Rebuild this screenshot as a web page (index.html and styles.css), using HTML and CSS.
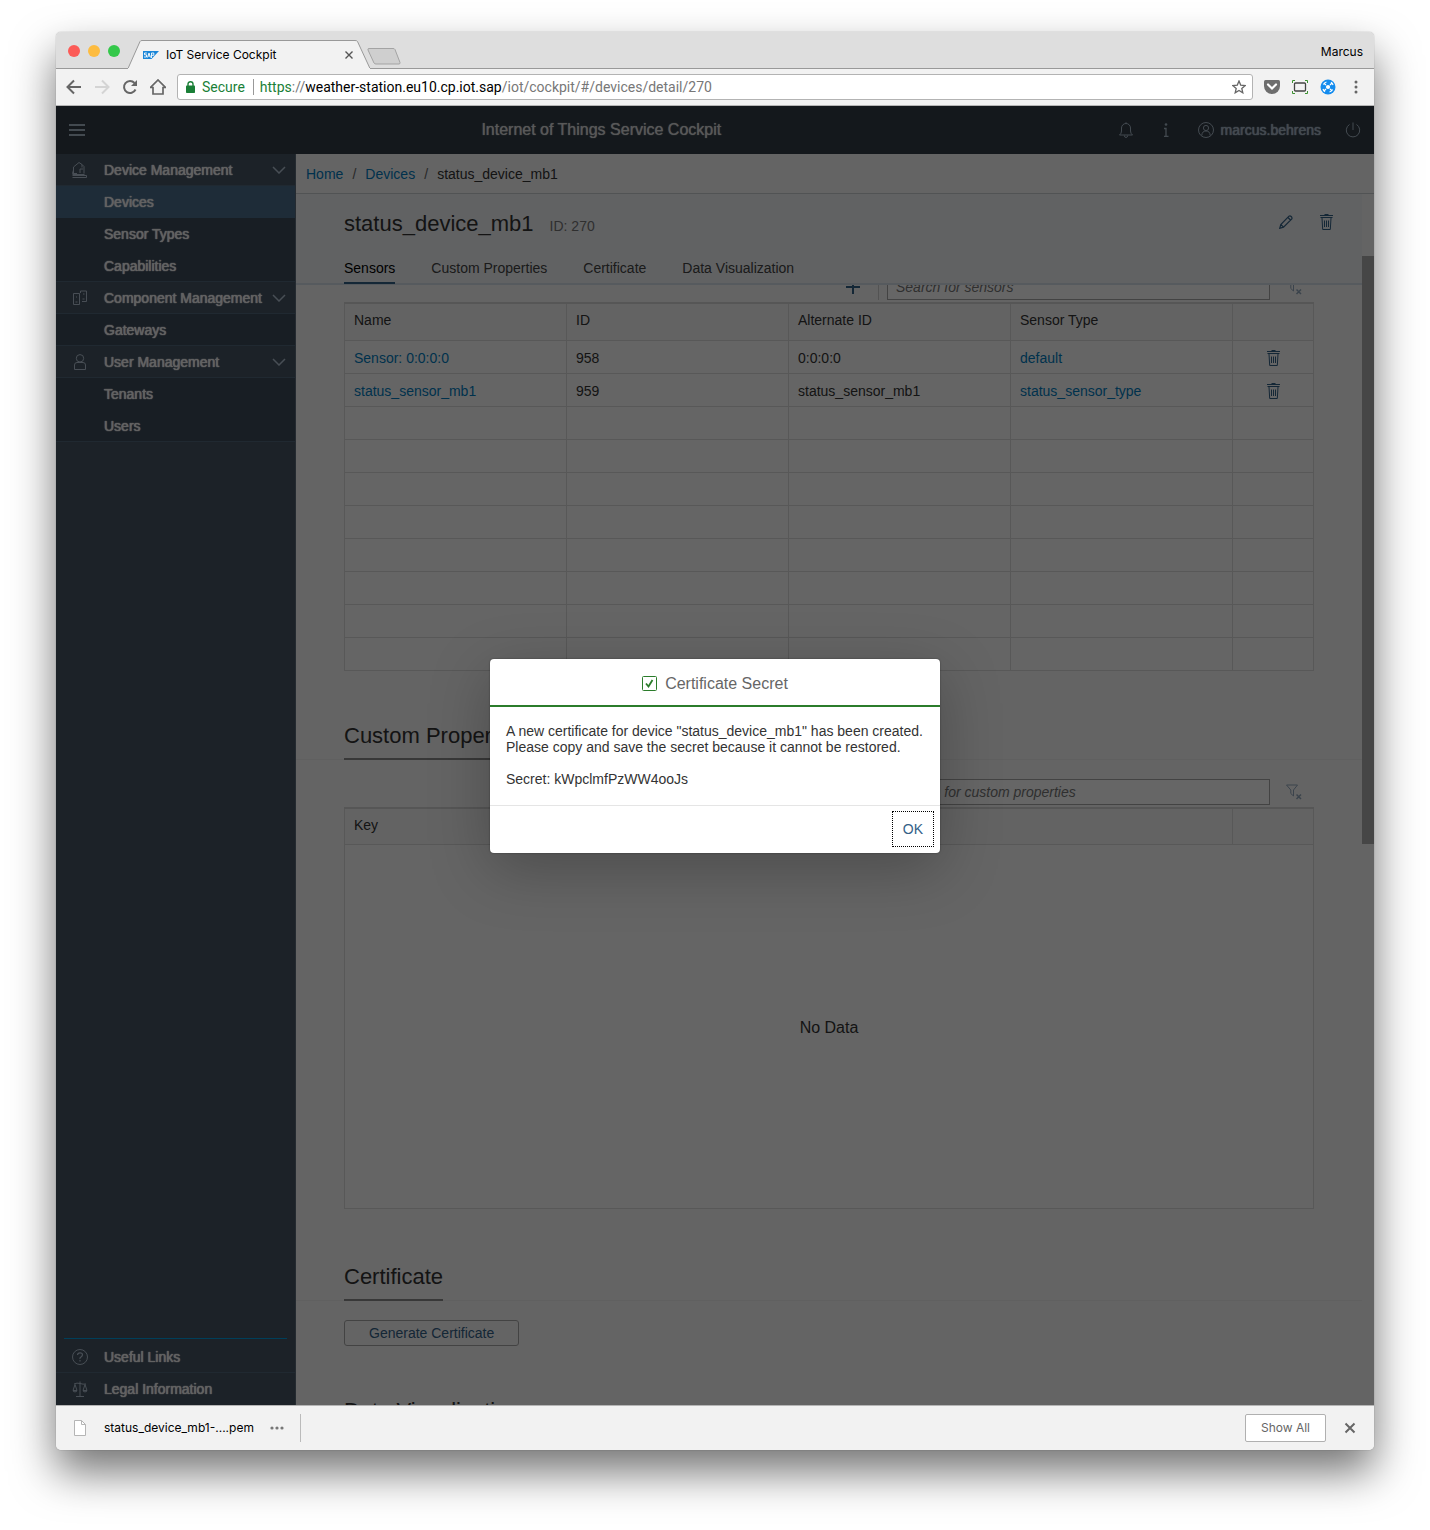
FILE: index.html
```html
<!DOCTYPE html>
<html lang="en">
<head>
<meta charset="utf-8">
<meta name="viewport" content="width=device-width, initial-scale=1">
<title>IoT Service Cockpit</title>
<link rel="stylesheet" href="styles.css">
</head>
<body>
<svg class="sprite" aria-hidden="true">
  <symbol id="trash" viewBox="0 0 13 16">
    <path d="M4.500.5h4M0 1.500h13M.5 3.500h12M2 4l.7 11.500h7.600L11 4M4.500 6.500V13M6.500 6.500V13M8.500 6.500V13" fill="none" stroke="currentColor"/>
  </symbol>
  <symbol id="chevron" viewBox="0 0 14 8">
    <path d="M1 1l6 6 6-6" fill="none" stroke="currentColor" stroke-width="1.500"/>
  </symbol>
  <symbol id="filter" viewBox="0 0 16 16">
    <path d="M.5 1h11L7.500 6v6L4.800 9.500V6z" fill="none" stroke="currentColor"/>
    <path d="M10.500 10.500l4.500 4.500M15 10.500L10.500 15" stroke="currentColor" stroke-width="1.500"/>
  </symbol>
</svg>

<div class="window">
  <div class="tabstrip">
    <div class="lights"><i class="light red"></i><i class="light yellow"></i><i class="light green"></i></div>
    <div class="tab">
      <svg class="tab-shape" viewBox="0 0 242 29" preserveAspectRatio="none" aria-hidden="true">
        <path d="M0 28.500L12 1.500Q12.500.5 14 .5H227Q229 .5 229.500 1.500L242 28.500" fill="#f2f2f2" stroke="#999"/>
        <path d="M0 29H242" stroke="#f2f2f2" stroke-width="2"/>
      </svg>
      <svg class="favicon" viewBox="0 0 16 8" aria-hidden="true">
        <path d="M0 0h16L8.500 8H0z" fill="#1a86d8"/>
        <path d="M3.800 2H1.500v1.800h2V6H1M4.500 6.500L6 2l1.500 4.500M5.200 5h2M8.500 7V2h2.300v2.300H8.500" fill="none" stroke="#fff" stroke-width=".9"/>
      </svg>
      <span class="tab-title">IoT Service Cockpit</span>
      <button class="plain" aria-label="Close tab"><svg width="8" height="8" viewBox="0 0 8 8"><path d="M.5.5l7 7M7.500.5l-7 7" stroke="#555" stroke-width="1.400"/></svg></button>
    </div>
    <button class="plain" aria-label="New tab"><svg width="34" height="17" viewBox="0 0 34 17"><path d="M2 .5H26Q27.500.5 28 1.500L33 14.500Q33.300 16 32 16H9Q7.500 16 7 15L1 2Q.5.5 2 .5z" fill="#cfcfcf" stroke="#a3a3a3"/></svg></button>
    <span class="profile">Marcus</span>
  </div>

  <div class="toolbar">
    <button class="plain" aria-label="Back"><svg width="16" height="16" viewBox="0 0 16 16"><path d="M15 8H2M8 1.500L1.500 8 8 14.500" fill="none" stroke="#666" stroke-width="2"/></svg></button>
    <button class="plain" aria-label="Forward"><svg width="16" height="16" viewBox="0 0 16 16"><path d="M1 8h13M8 1.500L14.500 8 8 14.500" fill="none" stroke="#d4d4d4" stroke-width="2"/></svg></button>
    <button class="plain" aria-label="Reload"><svg width="16" height="16" viewBox="0 0 16 16"><path d="M13.500 10.500A6 6 0 1 1 12.500 4" fill="none" stroke="#666" stroke-width="2"/><path d="M15 1v6H9z" fill="#666"/></svg></button>
    <button class="plain" aria-label="Home"><svg width="16" height="16" viewBox="0 0 16 16"><path d="M.5 8.500L8 1l7.500 7.500H13V15H3V8.500z" fill="none" stroke="#666" stroke-width="1.700"/></svg></button>
    <div class="address">
      <svg width="9" height="12" viewBox="0 0 9 12" aria-hidden="true"><rect y="4.500" width="9" height="7.500" rx=".8" fill="#1a7f37"/><path d="M2 5V3a2.500 2.300 0 0 1 5 0v2" fill="none" stroke="#1a7f37" stroke-width="1.400"/></svg>
      <span class="secure">Secure</span>
      <span class="url"><span class="scheme">https</span>://<span class="host">weather-station.eu10.cp.iot.sap</span>/iot/cockpit/#/devices/detail/270</span>
      <button class="plain" aria-label="Bookmark"><svg width="14" height="14" viewBox="0 0 14 14"><path d="M7 1l1.700 4.100 4.500.4-3.400 2.900 1 4.400L7 10.500l-3.800 2.300 1-4.400L.8 5.500l4.500-.4z" fill="none" stroke="#666" stroke-width="1.300"/></svg></button>
    </div>
    <div class="extensions">
      <svg width="16" height="14" viewBox="0 0 16 14" aria-hidden="true"><path d="M0 1.500Q0 0 1.500 0h13Q16 0 16 1.500V6a8 8 0 0 1-16 0z" fill="#6e6e6e"/><path d="M4 4.500l4 4 4-4" fill="none" stroke="#fff" stroke-width="2.200" stroke-linecap="round"/></svg>
      <svg width="16" height="14" viewBox="0 0 16 14" aria-hidden="true"><rect x="2.500" y="3" width="11" height="8" rx="1" fill="none" stroke="#444" stroke-width="1.300"/><path d="M.5 3V.5H3M13 .5h2.500V3M.5 11v2.500H3M13 13.500h2.500V11" fill="none" stroke="#3c9130"/></svg>
      <svg width="16" height="16" viewBox="0 0 16 16" aria-hidden="true"><circle cx="8" cy="8" r="7.500" fill="#148cee"/><circle cx="8" cy="8" r="2.100" fill="#fff"/><path d="M3.300 5.500Q4.500 3.500 6.500 3M11 3.300Q12.500 4.300 13 6M3 10Q3.500 11.700 5 12.700M12.700 10.500Q11.500 12.500 9.500 13M6 6L4.500 4.800M10 10l1.500 1.200M6 10l-1.500 1.500M10 6l1.500-1.500" fill="none" stroke="#fff" stroke-width="1.200"/></svg>
      <button class="plain more" aria-label="Menu"><svg width="4" height="14" viewBox="0 0 4 14"><circle cx="2" cy="2" r="1.500" fill="#666"/><circle cx="2" cy="7" r="1.500" fill="#666"/><circle cx="2" cy="12" r="1.500" fill="#666"/></svg></button>
    </div>
  </div>

  <div class="app">
    <header class="shell">
      <button class="plain menu" aria-label="Toggle navigation"><svg width="16" height="12" viewBox="0 0 16 12"><path d="M0 1h16M0 6h16M0 11h16" stroke="currentColor" stroke-width="2"/></svg></button>
      <h1 class="shell-title">Internet of Things Service Cockpit</h1>
      <div class="shell-tools">
        <button class="plain" aria-label="Notifications"><svg width="16" height="16" viewBox="0 0 16 16"><path d="M1.500 13Q3.500 11.500 3.500 9V6A4.500 4.500 0 0 1 12.500 6V9Q12.500 11.500 14.500 13zM6.300 13.500Q6.500 15.500 8 15.500T9.700 13.500M8 .3V2" fill="none" stroke="currentColor"/></svg></button>
        <button class="plain" aria-label="Information"><svg width="16" height="16" viewBox="0 0 16 16"><circle cx="8" cy="2.500" r="1.300" fill="currentColor"/><path d="M6 6.500h2V14M6 14.300h4.500" fill="none" stroke="currentColor" stroke-width="1.300"/></svg></button>
        <button class="plain user"><svg width="16" height="16" viewBox="0 0 16 16" aria-hidden="true"><g fill="none" stroke="currentColor"><circle cx="8" cy="8" r="7.500"/><circle cx="8" cy="6" r="2.600"/><path d="M3.800 13.500Q4 9 8 9t4.200 4.500"/></g></svg>marcus.behrens</button>
        <button class="plain" aria-label="Log out"><svg width="16" height="16" viewBox="0 0 16 16"><path d="M8 .5V8M4.500 2.500A6.700 6.700 0 1 0 11.500 2.500" fill="none" stroke="currentColor"/></svg></button>
      </div>
    </header>

    <div class="main">
      <nav class="side">
        <ul class="nav">
          <li><a class="group" href="#device-management"><svg width="18" height="18" viewBox="0 0 18 18"><path d="M2.500 12.500V6L8 1.500l3 2v3M2.500 9L1.500 12.500H6M11 3.500l2 2v7M1.500 13.500h12M1.500 16.500h14v-2H1.500M9 12V8h3" fill="none" stroke="currentColor"/></svg><span>Device Management</span><svg class="arrow"><use href="#chevron"/></svg></a>
            <ul class="sub"><li><a class="current" href="#devices">Devices</a></li><li><a href="#sensor-types">Sensor Types</a></li><li><a href="#capabilities">Capabilities</a></li></ul></li>
          <li><a class="group" href="#component-management"><svg width="18" height="18" viewBox="0 0 18 18"><path d="M2.500 4.500h6v11h-6zM9.500 4V2h6v10.500H11M5 8h1M4.500 13h2M12 5h1.500M11.500 10h2" fill="none" stroke="currentColor"/></svg><span>Component Management</span><svg class="arrow"><use href="#chevron"/></svg></a>
            <ul class="sub"><li><a href="#gateways">Gateways</a></li></ul></li>
          <li><a class="group" href="#user-management"><svg width="18" height="18" viewBox="0 0 18 18"><path d="M3.500 16.500V12Q3.500 9.500 6 9.500h6Q14.500 9.500 14.500 12v4.500z" fill="none" stroke="currentColor"/><circle cx="9" cy="5.300" r="3.700" fill="none" stroke="currentColor"/></svg><span>User Management</span><svg class="arrow"><use href="#chevron"/></svg></a>
            <ul class="sub"><li><a href="#tenants">Tenants</a></li><li><a href="#users">Users</a></li></ul></li>
        </ul>
        <ul class="nav foot">
          <li><a class="group" href="#links"><svg width="18" height="18" viewBox="0 0 18 18"><circle cx="9" cy="9" r="7.500" fill="none" stroke="currentColor"/><path d="M6.500 7Q6.500 4.800 9 4.800t2.500 2Q11.500 8 10 9T9 11M9 12v1.500" fill="none" stroke="currentColor" stroke-width="1.200"/></svg><span>Useful Links</span></a></li>
          <li><a class="group" href="#legal"><svg width="18" height="18" viewBox="0 0 18 18"><path d="M9 1.500v15M5 16.500h8M3 4Q6 2.500 9 3.500T15 4M4 4.500L2 10.500h4zM14 4.500l-2 6h4zM2 11Q4 13 6 11M12 11Q14 13 16 11" fill="none" stroke="currentColor"/></svg><span>Legal Information</span></a></li>
        </ul>
      </nav>

      <main class="page">
        <nav class="crumbs" aria-label="Breadcrumb"><a href="#home">Home</a><span class="slash">/</span><a href="#devices">Devices</a><span class="slash">/</span><span>status_device_mb1</span></nav>
        <div class="scroll">
          <div class="object">
            <header class="object-head">
              <div class="object-title">
                <h2>status_device_mb1</h2><span class="object-id">ID: 270</span>
                <div class="object-actions">
                  <button class="plain" aria-label="Edit"><svg width="14" height="14" viewBox="0 0 14 14"><path d="M.7 13.300L1.800 9.500 10 1.200Q11 .3 12.200 1.500T12.800 4L4.500 12.200zM9 2.500L11.500 5M1.800 9.500l2.700 2.700" fill="none" stroke="currentColor" stroke-width="1.200"/></svg></button>
                  <button class="plain" aria-label="Delete device"><svg width="13" height="16"><use href="#trash"/></svg></button>
                </div>
              </div>
              <nav class="anchors"><a class="active" href="#sensors">Sensors</a><a href="#custom">Custom Properties</a><a href="#certificate">Certificate</a><a href="#data">Data Visualization</a></nav>
            </header>
            <div class="sections">
              <section class="section scrolled" id="sensors">
                <div class="tools">
                  <button class="plain add" aria-label="Add sensor"><svg width="14" height="14" viewBox="0 0 14 14"><path d="M7 0v14M0 7h14" stroke="currentColor" stroke-width="2"/></svg></button>
                  <input class="search" type="search" placeholder="Search for sensors" aria-label="Search for sensors">
                  <button class="plain clear" aria-label="Clear filter"><svg width="16" height="16"><use href="#filter"/></svg></button>
                </div>
                <table class="grid">
                  <colgroup><col><col><col><col><col class="act"></colgroup>
                  <thead><tr><th>Name</th><th>ID</th><th>Alternate ID</th><th>Sensor Type</th><th></th></tr></thead>
                  <tbody>
                    <tr><td><a href="#s958">Sensor: 0:0:0:0</a></td><td>958</td><td>0:0:0:0</td><td><a href="#default">default</a></td><td class="cell-act"><button class="plain" aria-label="Delete sensor 958"><svg width="13" height="16"><use href="#trash"/></svg></button></td></tr>
                    <tr><td><a href="#s959">status_sensor_mb1</a></td><td>959</td><td>status_sensor_mb1</td><td><a href="#status">status_sensor_type</a></td><td class="cell-act"><button class="plain" aria-label="Delete sensor 959"><svg width="13" height="16"><use href="#trash"/></svg></button></td></tr>
                    <tr><td></td><td></td><td></td><td></td><td></td></tr>
                    <tr><td></td><td></td><td></td><td></td><td></td></tr>
                    <tr><td></td><td></td><td></td><td></td><td></td></tr>
                    <tr><td></td><td></td><td></td><td></td><td></td></tr>
                    <tr><td></td><td></td><td></td><td></td><td></td></tr>
                    <tr><td></td><td></td><td></td><td></td><td></td></tr>
                    <tr><td></td><td></td><td></td><td></td><td></td></tr>
                    <tr><td></td><td></td><td></td><td></td><td></td></tr>
                  </tbody>
                </table>
              </section>
              <section class="section properties" id="custom">
                <div class="heading"><h3>Custom Properties</h3></div>
                <div class="tools">
                  <input class="search" type="search" placeholder="Search for custom properties" aria-label="Search for custom properties">
                  <button class="plain clear" aria-label="Clear filter"><svg width="16" height="16"><use href="#filter"/></svg></button>
                </div>
                <table class="grid">
                  <colgroup><col><col><col class="act"></colgroup>
                  <thead><tr><th>Key</th><th>Value</th><th></th></tr></thead>
                  <tbody><tr><td class="nodata" colspan="3">No Data</td></tr></tbody>
                </table>
              </section>
              <section class="section" id="certificate">
                <div class="heading"><h3>Certificate</h3></div>
                <button class="generate">Generate Certificate</button>
              </section>
              <section class="section" id="data">
                <div class="heading"><h3>Data Visualization</h3></div>
              </section>
            </div>
          </div>
          <div class="track"><div class="thumb"></div></div>
        </div>
      </main>
    </div>

    <div class="overlay">
      <div class="dialog" role="alertdialog" aria-modal="true" aria-labelledby="dlg-title">
        <header class="dialog-head">
          <svg width="15" height="15" viewBox="0 0 15 15" aria-hidden="true"><rect x=".5" y=".5" width="14" height="14" rx="1" fill="none" stroke="#2b7c2b"/><path d="M4 7.500l2.500 3L10.500 4" fill="none" stroke="#2b7c2b" stroke-width="1.800"/></svg>
          <h2 id="dlg-title">Certificate Secret</h2>
        </header>
        <div class="dialog-body">
          <p>A new certificate for device "status_device_mb1" has been created.<br>Please copy and save the secret because it cannot be restored.</p>
          <p>Secret: kWpclmfPzWW4ooJs</p>
        </div>
        <footer class="dialog-foot"><button class="ok">OK</button></footer>
      </div>
    </div>
  </div>

  <footer class="downloads">
    <svg width="12" height="16" viewBox="0 0 12 16" aria-hidden="true"><path d="M.5.5h7l4 4v11H.5z" fill="#fff" stroke="#b5b5b5"/><path d="M7.500.5v4h4" fill="none" stroke="#b5b5b5"/></svg>
    <span class="file">status_device_mb1-....pem</span>
    <button class="plain" aria-label="Download options"><svg width="14" height="4" viewBox="0 0 14 4"><circle cx="2" cy="2" r="1.600" fill="#777"/><circle cx="7" cy="2" r="1.600" fill="#777"/><circle cx="12" cy="2" r="1.600" fill="#777"/></svg></button>
    <span class="rule"></span>
    <button class="show-all">Show All</button>
    <button class="plain" aria-label="Close downloads"><svg width="12" height="12" viewBox="0 0 12 12"><path d="M1.500 1.500l9 9M10.500 1.500l-9 9" stroke="#666" stroke-width="2"/></svg></button>
  </footer>
</div>
</body>
</html>
```
FILE: styles.css
```css
* { box-sizing: border-box; }
body {
  margin: 0;
  padding: 32px 56px 80px;
  height: 100vh;
  background: #fff;
  font: 14px/16px "Liberation Sans", Arial, sans-serif;
  color: #333;
}
h1, h2, h3, p, ul { margin: 0; padding: 0; font-weight: normal; }
ul { list-style: none; }
a { color: #007cc0; text-decoration: none; }
svg { display: block; flex: none; }
button { font: inherit; }
.sprite { display: none; }
.plain {
  display: flex;
  align-items: center;
  padding: 0;
  border: 0;
  background: none;
  color: inherit;
}

.window {
  display: flex;
  flex-direction: column;
  height: 100%;
  border-radius: 5px;
  overflow: hidden;
  box-shadow: 0 0 1px rgba(0, 0, 0, .5), 0 22px 44px rgba(0, 0, 0, .55);
}

/* Browser chrome */
.tabstrip {
  display: flex;
  align-items: center;
  flex: none;
  height: 37px;
  padding: 2px 11px 0 12px;
  background: #dedede;
  border-bottom: 1px solid #999;
  font: 12px/16px Inter, sans-serif;
  color: #000;
}
.lights { display: flex; gap: 8px; width: 60px; }
.light { width: 12px; height: 12px; border-radius: 50%; }
.red { background: #fc5b57; }
.yellow { background: #fdbc40; }
.green { background: #34c84a; }
.tab {
  position: relative;
  display: flex;
  align-items: center;
  align-self: flex-end;
  width: 242px;
  height: 28px;
  padding: 2px 17px 0 15px;
}
.tab-shape { position: absolute; left: 0; top: 0; width: 242px; height: 29px; }
.favicon { position: relative; width: 16px; height: 8px; }
.tab-title { position: relative; flex: 1; padding-left: 7px; }
.tab .plain { position: relative; }
.tab + .plain { margin: 10px 0 0 -3px; }
.profile { margin-left: auto; padding-top: 2px; }
.toolbar {
  display: flex;
  align-items: center;
  flex: none;
  gap: 12px;
  height: 37px;
  padding: 0 16px 0 10px;
  background: #f2f2f2;
  border-bottom: 1px solid #b5b5b5;
}
.address {
  display: flex;
  align-items: center;
  flex: 1;
  height: 26px;
  margin: 0 -1px;
  padding: 0 6px 0 8px;
  border: 1px solid #b3b3b3;
  border-radius: 3px;
  background: #fff;
  font: 14px/16px Roboto, sans-serif;
}
.secure {
  margin: 0 6px 0 7px;
  padding-right: 8px;
  border-right: 1px solid #999;
  color: #1a7f37;
}
.url { flex: 1; color: #777; }
.scheme { color: #1a7f37; }
.host { color: #000; }
.extensions { display: flex; align-items: center; gap: 12px; }
.more { margin-left: 6px; }

/* Application */
.app {
  position: relative;
  display: flex;
  flex-direction: column;
  flex: 1;
  min-height: 0;
}
.shell {
  display: flex;
  align-items: center;
  flex: none;
  height: 48px;
  padding: 0 13px;
  background: #323e47;
  color: #a9b8c8;
}
.menu { width: 28px; }
.shell-title {
  flex: 1;
  padding-right: 12px;
  text-align: center;
  font-size: 16px;
  line-height: 20px;
  color: #dcdcdc;
  text-shadow: 0 0 1px #dcdcdc;
}
.shell-tools { display: flex; gap: 24px; }
.user { gap: 7px; text-shadow: 0 0 1px #a9b8c8, 0 0 1px #a9b8c8; }
.main { display: flex; flex: 1; min-height: 0; }

.side {
  display: flex;
  flex-direction: column;
  justify-content: space-between;
  flex: none;
  width: 240px;
  background: #465564;
  border-right: 1px solid #5c6c7c;
}
.nav a {
  display: flex;
  align-items: center;
  height: 32px;
  padding-left: 48px;
  color: #f5f5f5;
  white-space: nowrap;
  text-shadow: 0 0 1px #f5f5f5, 0 0 1px #f5f5f5;
}
.nav .group {
  gap: 15px;
  padding: 0 9px 0 15px;
  border-bottom: 1px solid #52677a;
}
.group span { flex: 1; min-width: 0; }
.group svg { color: #b4c4d4; }
.group .arrow { width: 14px; height: 8px; margin-left: -8px; }
.nav .sub { background: #3e4b5a; border-bottom: 1px solid #52677a; }
.nav .sub li:last-child a { height: 31px; }
.nav .current { background: #4c6f8c; }
.foot::before {
  content: "";
  display: block;
  height: 2px;
  margin: 0 8px;
  border-top: 1px solid #009de0;
}
.foot li:last-child .group { border-bottom: 0; }

.page { display: flex; flex-direction: column; flex: 1; min-width: 0; background: #fafafa; }
.crumbs {
  display: flex;
  align-items: center;
  flex: none;
  height: 40px;
  padding-left: 10px;
  border-bottom: 1px solid #cbcfd2;
}
.slash { width: 22px; text-align: center; color: #666; }
.scroll { display: flex; flex: 1; min-height: 0; }
.object { display: flex; flex-direction: column; flex: 1; min-width: 0; }
.track { flex: none; width: 12px; padding-top: 62px; }
.thumb { height: 588px; background: #afafaf; }
.object-head {
  flex: none;
  padding: 16px 29px 0 48px;
  background: #f2f5f8;
  border-bottom: 2px solid #d8e0ea;
}
.object-title { display: flex; align-items: center; gap: 16px; }
.object-title h2 { font-size: 22px; line-height: 28px; }
.object-id { padding-top: 4px; color: #777; }
.object-actions {
  display: flex;
  align-items: center;
  align-self: flex-start;
  gap: 27px;
  height: 24px;
  margin-left: auto;
  color: #346187;
}
.anchors { display: flex; gap: 36px; height: 45px; padding-top: 22px; }
.anchors a { height: 24px; color: #444; }
.anchors .active { color: #000; border-bottom: 2px solid #346187; }
.sections { flex: 1; min-height: 0; overflow: hidden; }
.section { padding: 0 48px; }
.scrolled { margin-top: -11px; }
.tools { display: flex; align-items: center; justify-content: flex-end; height: 26px; }
.add {
  height: 26px;
  margin-right: 8px;
  padding-right: 18px;
  border-right: 1px solid #d0d0d0;
  color: #346187;
}
.search {
  width: 383px;
  height: 26px;
  padding: 0 8px;
  border: 1px solid #a8a8a8;
  border-radius: 0;
  background: #fff;
  font: inherit;
  appearance: none;
}
.search::placeholder { color: #777; font-style: italic; opacity: 1; }
.clear { padding: 0 12px 0 16px; color: #93a9bd; }
.grid {
  width: 100%;
  margin-top: 2px;
  border-collapse: collapse;
  table-layout: fixed;
  border: 1px solid #dcdcdc;
  border-top: 2px solid #d6d6d6;
}
.grid .act { width: 81px; }
.grid th, .grid td { padding: 0 9px; border: 1px solid #dcdcdc; text-align: left; font-weight: normal; }
.grid th { height: 37px; padding-bottom: 3px; background: #f7f7f7; border-top: 0; }
.grid td { height: 33px; padding-top: 2px; background: #fcfcfc; }
.cell-act .plain { margin: 0 auto; color: #346187; }
.grid .nodata { height: 364px; text-align: center; font-size: 16px; }
.properties { padding-bottom: 3px; }
.heading { margin: 0 -48px 19px; padding: 50px 48px 0; border-bottom: 1px solid #f0f0f0; }
.heading h3 {
  width: fit-content;
  height: 39px;
  margin-bottom: -1px;
  border-bottom: 2px solid #8c8c8c;
  font-size: 22px;
  line-height: 30px;
}
.generate {
  height: 26px;
  padding: 0 24px;
  border: 1px solid #a8a8a8;
  border-radius: 3px;
  background: #fafafa;
  color: #346187;
}

/* Message dialog */
.overlay {
  position: absolute;
  inset: 0;
  display: flex;
  align-items: center;
  justify-content: center;
  background: rgba(0, 0, 0, .6);
}
.dialog {
  min-width: 450px;
  border-radius: 4px;
  background: #fff;
  box-shadow: 0 0 2px rgba(0, 0, 0, .4), 0 16px 60px rgba(0, 0, 0, .25);
}
.dialog-head {
  display: flex;
  align-items: center;
  justify-content: center;
  gap: 8px;
  height: 48px;
  padding-top: 4px;
  border-bottom: 2px solid #2b7c2b;
  color: #666;
}
.dialog-head h2 { font-size: 16px; line-height: 20px; }
.dialog-body { padding: 16px 16px 18px; }
.dialog-body p + p { margin-top: 16px; }
.dialog-foot {
  display: flex;
  align-items: center;
  justify-content: flex-end;
  height: 48px;
  padding: 0 6px;
  border-top: 1px solid #e5e5e5;
}
.ok {
  height: 36px;
  padding: 0 10px;
  border: 1px dotted #000;
  background: #fff;
  color: #346187;
}

/* Download shelf */
.downloads {
  display: flex;
  align-items: center;
  flex: none;
  height: 45px;
  padding: 0 18px;
  background: #f2f2f2;
  border-top: 1px solid #b5b5b5;
  font: 12px/16px Inter, sans-serif;
  color: #000;
}
.file { margin: 0 16px 0 18px; }
.rule { width: 1px; height: 28px; margin: 0 auto 0 16px; background: #bbb; }
.show-all {
  height: 28px;
  margin-right: 18px;
  padding: 0 15px;
  border: 1px solid #b0b0b0;
  border-radius: 2px;
  background: #fff;
  color: #666;
}
```
